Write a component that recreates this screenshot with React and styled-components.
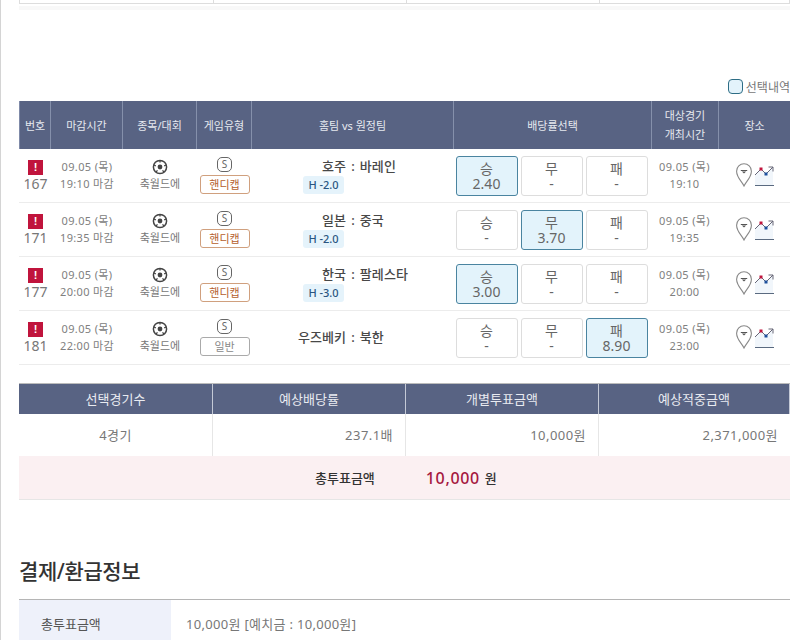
import React from "react";
import styled, { createGlobalStyle } from "styled-components";

const Global = createGlobalStyle`
  html, body { margin: 0; padding: 0; background: #fff; height: 640px; overflow: hidden; }
  body { font-family: "Noto Sans", "Noto Sans CJK KR", sans-serif; color: #555; }
`;
const Page = styled.div`
  width: 807px; height: 640px; overflow: hidden; box-sizing: border-box;
  border-left: 1px solid #d4d4d4; padding-left: 18px;
`;
const Content = styled.div`width: 771px;`;
const TopStub = styled.div`
  height: 3px; display: grid; grid-template-columns: 194px 193px 193px 191px;
  border-bottom: 1px solid #ddd; box-shadow: 0 6px 0 #f8f8f8;
  & > div { border-left: 1px solid #ddd; }
  & > div:last-child { border-right: 1px solid #ddd; }
`;
const LegendRow = styled.div`
  margin: 71px 0 3px; height: 23px; display: flex; justify-content: flex-end; align-items: center; gap: 3px;
  font-size: 12px; color: #777;
`;
const LegendBox = styled.span`
  width: 13px; height: 13px; border-radius: 4px; border: 1px solid #2d6d85; background: #e3f3fb;
`;
const COLS = "31px 72px 74px 55px 202px 198px 67px 71px";
const HeadRow = styled.div`
  display: grid; grid-template-columns: ${COLS}; height: 48px; background: #586383;
  border-left: 1px solid #7f8aa8; box-sizing: border-box; width: 771px;
`;
const HeadCell = styled.div`
  display: flex; align-items: center; justify-content: center; text-align: center;
  color: #e6e9f0; font-size: 11px; line-height: 19px;
  border-right: 1px solid #8590ab;
  &:last-child { border-right: 0; }
`;
const BetRow = styled.div`
  display: grid; grid-template-columns: ${COLS}; height: 54px; box-sizing: border-box; padding-left: 1px;
  border-bottom: 1px solid #ececec;
`;
const Cell = styled.div`
  display: flex; flex-direction: column; align-items: center; justify-content: center;
  padding-bottom: 2px; box-sizing: border-box;
`;
const DateCell = styled(Cell)`margin-left: -2px;`;
const NoCell = styled.div`
  display: flex; flex-direction: column; align-items: center; justify-content: center;
  font-size: 14px; color: #777; line-height: 17px;
`;
const Alert = styled.span`
  width: 15px; height: 15px; background: #c0143c; color: #fff; font: 700 11px/15px "Liberation Sans", sans-serif;
  text-align: center; display: block;
`;
const TimeText = styled.span`font-size: 11px; line-height: 17px; letter-spacing: 0.35px; color: #808080;`;
const Sport = styled.span`font-size: 11px; line-height: 15px; color: #777; margin-top: 1px;`;
const TypeCell = styled.div`display: flex; flex-direction: column; align-items: center; justify-content: center; gap: 3px;`;
const SBadge = styled.span`
  width: 15px; height: 15px; box-sizing: border-box; border: 1px solid #666; border-radius: 5px; font-size: 10px; line-height: 13px;
  text-align: center; color: #666;
`;
const TypeTag = styled.span`
  width: 50px; height: 19px; box-sizing: border-box; border-radius: 3px; text-align: center;
  font-size: 11px; line-height: 17px;
  border: 1px solid ${p => (p.$handi ? "#d0a07e" : "#aaa")};
  color: ${p => (p.$handi ? "#b5602c" : "#888")};
`;
const TeamCell = styled.div`position: relative; display: flex; flex-direction: column; justify-content: center;`;
const Teams = styled.div`
  display: grid; grid-template-columns: 1fr auto 1fr; column-gap: 5px;
  font-size: 13px; font-weight: 500; color: #484848; line-height: 18px; letter-spacing: 0.1px;
  margin-top: ${p => (p.$handi ? "-19px" : "-1px")};
`;
const Home = styled.span`text-align: right;`;
const HTag = styled.span`
  position: absolute; left: 51px; top: 27px; width: 41px; height: 18px; border-radius: 3px; background: #e5f3fb;
  color: #2a5580; font-size: 11px; line-height: 18px; text-align: center; font-weight: 500;
`;
const Odds = styled.div`display: flex; gap: 3px; align-items: center; justify-content: center; margin-left: -3px;`;
const OddBtn = styled.div`
  width: 62px; height: 40px; box-sizing: border-box; border-radius: 3px;
  display: flex; flex-direction: column; align-items: center; justify-content: center;
  border: 1px solid ${p => (p.$on ? "#4a84a0" : "#ddd")};
  background: ${p => (p.$on ? "#e3f3fb" : "#fff")};
  color: #666; font-size: 14px; line-height: 15px;
`;
const Venue = styled.div`display: flex; align-items: center; justify-content: center; gap: 3px; margin-left: 1px;`;
const Spacer = styled.div`height: 18px;`;
const Summary = styled.div`
  display: grid; grid-template-columns: 194px 193px 193px 191px; border-top: 1px solid #bbb;
`;
const SumHead = styled.div`
  background: #586383; color: #e9ebf1; height: 30px; line-height: 30px; text-align: center; font-size: 13px;
  border-right: 1px solid #c4c9d6;
  &:last-child { border-right: 0; }
`;
const SumCell = styled.div`
  height: 42px; line-height: 42px; font-size: 13px; color: #777; box-sizing: border-box; letter-spacing: 0.45px;
  border-right: 1px solid #e6e6e6; text-align: ${p => (p.$center ? "center" : "right")};
  padding-right: ${p => (p.$center ? 0 : 12)}px;
  &:last-child { border-right: 0; }
`;
const TotalBar = styled.div`
  height: 44px; background: #fbf0f2; border-bottom: 1px solid #e6e6e6; box-sizing: border-box;
  display: flex; align-items: center; font-size: 13px; font-weight: 500; color: #333;
  padding-left: 296px;
`;
const TotalValue = styled.span`
  margin-left: 51px; font-size: 16px; letter-spacing: 0.65px; color: #a5173f; font-weight: 500; margin-right: 5px;
`;
const Title = styled.h2`
  margin: 55px 0 0; font-size: 21px; line-height: 32px; font-weight: 500; color: #333; letter-spacing: -0.4px;
`;
const InfoRow = styled.div`
  margin-top: 12px; display: grid; grid-template-columns: 152px 1fr; border-top: 1px solid #b5b5b5;
  height: 50px; font-size: 13px;
`;
const InfoLabel = styled.div`background: #eef1fa; padding: 14px 0 0 22px; line-height: 20px; color: #555;`;
const InfoValue = styled.div`padding: 14px 0 0 15px; line-height: 20px; color: #777; letter-spacing: 0.3px;`;

const Ball = () => (
  <svg width="16" height="16" viewBox="0 0 16 16">
    <circle cx="8" cy="8" r="6.6" fill="#fff" stroke="#444" strokeWidth="1.5" />
    <circle cx="8" cy="8" r="2.4" fill="#444" />
    <path d="M8 1.5v2M2 6l1.8 .8M14 6l-1.8 .8M4 13l1.5-1.6M12 13l-1.5-1.6" stroke="#444" strokeWidth="1.3" />
  </svg>
);
const Icons = () => (
  <Venue>
    <svg width="16" height="24" viewBox="0 0 16 24">
      <path d="M8 23C6 18.5 .6 14.5 .6 8.2a7.4 7.4 0 0 1 14.8 0C15.4 14.5 10 18.5 8 23z" fill="#fff" stroke="#888" strokeWidth="1.1" />
      <path d="M4.8 7h6.4v1H4.8zM5.8 8.4h4.4L8 10.6z" fill="#555" />
    </svg>
    <svg width="20" height="24" viewBox="0 0 20 24">
      <path d="M0 12l6-6 5 5 7-7v18H0z" fill="#f1f6fb" />
      <path d="M0 12l6-6 5 5 7-7M13.5 4H18v4.5" fill="none" stroke="#667" strokeWidth="1" />
      <rect x="4.5" y="4.5" width="3" height="3" fill="#c0143c" />
      <rect x="9.5" y="9.5" width="3" height="3" fill="#1c4f9c" />
      <path d="M0 22.5h19" stroke="#5a6a80" strokeWidth="1" />
    </svg>
  </Venue>
);
const rows = [
  { no: 167, time: "19:10", type: "핸디캡", home: "호주", away: "바레인", h: "H -2.0", pick: 0, odd: "2.40", date: "19:10" },
  { no: 171, time: "19:35", type: "핸디캡", home: "일본", away: "중국", h: "H -2.0", pick: 1, odd: "3.70", date: "19:35" },
  { no: 177, time: "20:00", type: "핸디캡", home: "한국", away: "팔레스타", h: "H -3.0", pick: 0, odd: "3.00", date: "20:00" },
  { no: 181, time: "22:00", type: "일반", home: "우즈베키", away: "북한", pick: 2, odd: "8.90", date: "23:00" },
];
const labels = ["승", "무", "패"];

export default function App() {
  return (
    <Page>
      <Global />
      <Content>
        <TopStub><div /><div /><div /><div /></TopStub>
        <LegendRow><LegendBox />선택내역</LegendRow>
        <HeadRow>
          <HeadCell>번호</HeadCell><HeadCell>마감시간</HeadCell><HeadCell>종목/대회</HeadCell><HeadCell>게임유형</HeadCell>
          <HeadCell>홈팀 vs 원정팀</HeadCell><HeadCell>배당률선택</HeadCell><HeadCell>대상경기<br />개최시간</HeadCell><HeadCell>장소</HeadCell>
        </HeadRow>
        {rows.map(r => (
          <BetRow key={r.no}>
            <NoCell><Alert>!</Alert>{r.no}</NoCell>
            <Cell><TimeText>09.05 (목)</TimeText><TimeText>{r.time} 마감</TimeText></Cell>
            <Cell><Ball /><Sport>축월드에</Sport></Cell>
            <TypeCell><SBadge>S</SBadge><TypeTag $handi={r.type === "핸디캡"}>{r.type}</TypeTag></TypeCell>
            <TeamCell>
              <Teams $handi={!!r.h}><Home>{r.home}</Home><span>:</span><span>{r.away}</span></Teams>
              {r.h && <HTag>{r.h}</HTag>}
            </TeamCell>
            <Odds>
              {labels.map((l, i) => (
                <OddBtn key={l} $on={i === r.pick}>
                  <span>{l}</span>
                  <span>{i === r.pick ? r.odd : "-"}</span>
                </OddBtn>
              ))}
            </Odds>
            <DateCell><TimeText>09.05 (목)</TimeText><TimeText>{r.date}</TimeText></DateCell>
            <Cell><Icons /></Cell>
          </BetRow>
        ))}
        <Spacer />
        <Summary>
          <SumHead>선택경기수</SumHead><SumHead>예상배당률</SumHead><SumHead>개별투표금액</SumHead><SumHead>예상적중금액</SumHead>
          <SumCell $center>4경기</SumCell><SumCell>237.1배</SumCell><SumCell>10,000원</SumCell><SumCell>2,371,000원</SumCell>
        </Summary>
        <TotalBar>총투표금액<TotalValue>10,000</TotalValue>원</TotalBar>
        <Title>결제/환급정보</Title>
        <InfoRow>
          <InfoLabel>총투표금액</InfoLabel>
          <InfoValue>10,000원 [예치금 : 10,000원]</InfoValue>
        </InfoRow>
      </Content>
    </Page>
  );
}
